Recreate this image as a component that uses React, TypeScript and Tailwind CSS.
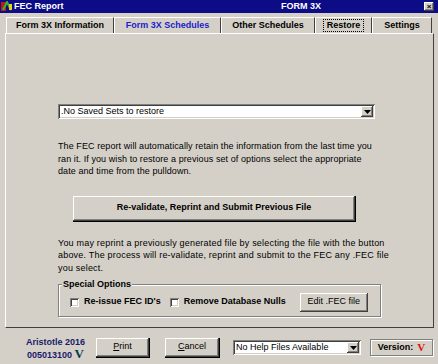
import React from "react";

const raised =
  "shadow-[inset_-1px_-1px_0_#404040,inset_1px_1px_0_#ffffff,inset_-2px_-2px_0_#808080]";
const sunken =
  "shadow-[inset_1px_1px_0_#808080,inset_-1px_-1px_0_#ffffff,inset_2px_2px_0_#404040,inset_-2px_-2px_0_#d4d0c8]";

type Tab = { label: string; active?: boolean; blue?: boolean; w: string };

const tabs: Tab[] = [
  { label: "Form 3X Information", w: "w-[108px]" },
  { label: "Form 3X Schedules", blue: true, w: "w-[107px]" },
  { label: "Other Schedules", w: "w-[94px]" },
  { label: "Restore", active: true, w: "w-[57px]" },
  { label: "Settings", w: "w-[60px]" },
];

function Arrow() {
  return (
    <div className={`flex h-full w-[12px] items-center justify-center bg-[#d4d0c8] ${raised}`}>
      <svg width="7" height="4" viewBox="0 0 7 4">
        <path d="M0 0h7L3.5 4z" fill="#000" />
      </svg>
    </div>
  );
}

function Checkbox({ label }: { label: string }) {
  return (
    <div className="flex items-center gap-[5px]">
      <div className={`h-[9px] w-[9px] bg-white ${sunken}`} />
      <span className="font-bold">{label}</span>
    </div>
  );
}

export default function App() {
  return (
    <div
      className="flex h-[364px] w-[438px] flex-col overflow-hidden bg-[#d4d0c8] text-[9px] text-black"
      style={{ fontFamily: '"Liberation Sans", Arial, sans-serif' }}
    >
      {/* Title bar */}
      <div className="relative flex h-[13px] items-center bg-[#0c0c86] text-white">
        <svg width="12" height="11" viewBox="0 0 12 11" className="ml-[1px]">
          <rect x="0" y="1" width="5" height="9" fill="#c01818" />
          <path d="M2 9L6 1l4 8" stroke="#2fb82f" strokeWidth="2" fill="none" />
          <rect x="8" y="3" width="3" height="6" fill="#e8d020" />
        </svg>
        <span className="ml-[1px] font-bold">FEC Report</span>
        <span className="absolute left-[281px] font-bold">FORM 3X</span>
        <div
          className={`absolute right-[4px] top-[2px] flex h-[9px] w-[10px] items-center justify-center bg-[#d4d0c8] text-[8px] font-bold leading-none text-black ${raised}`}
        >
          ×
        </div>
      </div>

      <div className="flex flex-1 flex-col pl-[5px] pr-[4px] pt-[4px]">
        {/* Tabs */}
        <div className="flex h-[16px] pl-[1px]">
          {tabs.map((t) => (
            <div
              key={t.label}
              className={`flex ${t.w} items-center justify-center border-l border-t border-white border-r border-r-[#404040] font-bold ${
                t.blue ? "text-[#1c1cc8]" : "text-black"
              }`}
            >
              <span className={t.active ? "border border-dotted border-black px-[3px] leading-[11px]" : ""}>
                {t.label}
              </span>
            </div>
          ))}
        </div>

        {/* Panel */}
        <div className="flex h-[295px] flex-col border-l border-t border-white border-b border-r border-b-[#404040] border-r-[#404040] pl-[52px]">
          <div className={`mt-[70px] flex h-[15px] w-[317px] items-center bg-white p-[2px] ${sunken}`}>
            <span className="flex-1 pl-[1px]">.No Saved Sets to restore</span>
            <Arrow />
          </div>

          <p className="mt-[21px] w-[316px] leading-[12.5px] tracking-[0.08px]">
            The FEC report will automatically retain the information from the last time you ran it. If
            you wish to restore a previous set of options select the appropriate date and time from
            the pulldown.
          </p>

          <div
            className={`ml-[15px] mt-[18px] flex h-[26px] w-[283px] items-center justify-center border-b border-r border-black font-bold ${raised}`}
          >
            Re-validate, Reprint and Submit Previous File
          </div>

          <p className="mt-[15px] w-[334px] leading-[12.5px] tracking-[0.2px]">
            You may reprint a previously generated file by selecting the file with the button above.
            The process will re-validate, reprint and submit to the FEC any .FEC file you select.
          </p>

          <div className="relative mt-[10px] h-[33px] w-[323px] border border-[#808080] shadow-[1px_1px_0_#ffffff,inset_1px_1px_0_#ffffff]">
            <span className="absolute left-[3px] top-[-7px] bg-[#d4d0c8] px-[1px] font-bold">
              Special Options
            </span>
            <div className="flex h-full items-center gap-[9px] pl-[11px] pt-[3px]">
              <Checkbox label="Re-issue FEC ID's" />
              <Checkbox label="Remove Database Nulls" />
              <div
                className={`ml-[5px] flex h-[19px] w-[68px] items-center justify-center ${raised}`}
              >
                Edit .FEC file
              </div>
            </div>
          </div>
        </div>

        {/* Bottom bar */}
        <div className="flex h-[36px] items-center pt-[3px]">
          <div className="flex w-[91px] flex-col items-center pl-[10px] pt-[1px] leading-[12px]">
            <span className="font-bold text-[#1a1a6a]">Aristotle 2016</span>
            <span className="font-bold text-[#1a1a6a]">
              005013100{" "}
              <span
                className="text-[13px] text-[#0a3a4a]"
                style={{ fontFamily: '"Liberation Serif", serif' }}
              >
                V
              </span>
            </span>
          </div>
          <div className={`flex h-[20px] w-[54px] items-center justify-center border-b border-r border-black ${raised}`}>
            <span className="underline decoration-1 underline-offset-1">P</span>rint
          </div>
          <div
            className={`ml-[15px] flex h-[20px] w-[55px] items-center justify-center border-b border-r border-black ${raised}`}
          >
            <span className="underline">C</span>ancel
          </div>
          <div className={`ml-[13px] flex h-[15px] w-[128px] items-center bg-white p-[2px] ${sunken}`}>
            <span className="flex-1 pl-[1px]">No Help Files Available</span>
            <Arrow />
          </div>
          <div className="ml-[9px] flex h-[17px] w-[63px] items-center justify-center gap-[4px] border border-[#808080] shadow-[1px_1px_0_#ffffff,inset_1px_1px_0_#ffffff] font-bold">
            Version:
            <span
              className="text-[11px] text-[#e01010]"
              style={{ fontFamily: '"Liberation Serif", serif' }}
            >
              V
            </span>
          </div>
        </div>
      </div>
      <div className="h-[1px] bg-black" />
    </div>
  );
}
